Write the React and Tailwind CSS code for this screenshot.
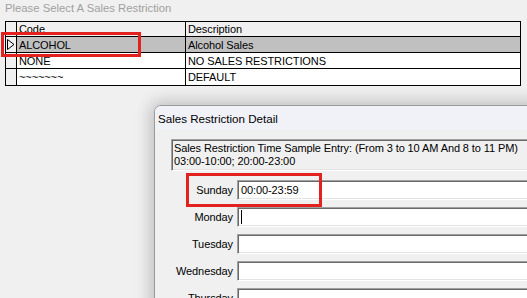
import React from 'react';

const sans = { fontFamily: '"Liberation Sans", Arial, sans-serif' };

const rows = [
  { code: 'ALCOHOL', desc: 'Alcohol Sales', selected: true },
  { code: 'NONE', desc: 'NO SALES RESTRICTIONS' },
  { code: '~~~~~~~', desc: 'DEFAULT' },
];

const days = ['Sunday', 'Monday', 'Tuesday', 'Wednesday', 'Thursday'];

function Sunken({ className = '', children }) {
  return (
    <div
      className={`border border-t-[#a0a0a0] border-l-[#a0a0a0] border-b-white border-r-white shadow-[inset_1px_1px_0_#696969,inset_-1px_-1px_0_#e3e3e3] ${className}`}
    >
      {children}
    </div>
  );
}

export default function App() {
  return (
    <div
      className="relative w-[527px] h-[298px] overflow-hidden bg-[#f0f0f0] text-black text-[11px] tracking-[-0.1px] whitespace-nowrap"
      style={sans}
    >
      {/* Grid panel */}
      <div className="h-[21px] pl-[5px] pt-[1px] leading-[15px] text-[#a0a0a0] text-[11.3px] tracking-normal">
        Please Select A Sales Restriction
      </div>
      <div className="ml-[5px] w-[516px] border border-black leading-[14px]">
        <div className="flex h-[15px] border-b border-black bg-[#f0f0f0]">
          <div className="w-[11px] border-r border-black" />
          <div className="w-[169px] border-r border-black pl-[2px]">Code</div>
          <div className="flex-1 pl-[2px]">Description</div>
        </div>
        {rows.map((r) => (
          <div
            key={r.code}
            className={`flex h-[16px] border-b border-black last:border-b-0 ${r.selected ? 'bg-[#c0c0c0]' : 'bg-white'}`}
          >
            <div className="w-[11px] border-r border-black bg-[#f0f0f0] flex items-center justify-center">
              {r.selected && (
                <svg width="8" height="11" viewBox="0 0 8 11">
                  <path d="M0.5 0.5 L7 5.5 L0.5 10.5 Z" fill="none" stroke="#000" strokeWidth="1" />
                </svg>
              )}
            </div>
            <div className="w-[169px] border-r border-black pl-[2px] flex items-center">{r.code}</div>
            <div className="flex-1 pl-[2px] flex items-center">{r.desc}</div>
          </div>
        ))}
      </div>

      {/* Highlight on selected row */}
      <div className="absolute left-[1px] top-[32px] w-[140px] h-[25px] border-[3px] border-[#e3211f]" />

      {/* Detail dialog */}
      <div className="absolute left-[154px] top-[105px] w-[400px] h-[220px] border border-[#9a9a9a] rounded-tl-[7px] bg-[#f0f0f0] shadow-[0_0_16px_4px_rgba(0,0,0,0.2)]">
        <div className="h-[24px] flex items-center pl-[3px] pt-[1px] rounded-tl-[6px] bg-[#f1f2f8] text-[11.6px] tracking-normal">
          Sales Restriction Detail
        </div>
        <div className="pt-[9px] pl-[16px]">
          <Sunken className="h-[32px] pl-[2px] pt-[2px] leading-[13px] bg-[#f0f0f0]">
            <div>Sales Restriction Time Sample Entry: (From 3 to 10 AM And 8 to 11 PM)</div>
            <div>03:00-10:00; 20:00-23:00</div>
          </Sunken>
        </div>
        <div className="mt-[9px] flex flex-col gap-[7px]">
          {days.map((d, i) => (
            <div key={d} className="relative flex items-center h-[20px]">
              <div className="w-[78px] text-right">{d}</div>
              <Sunken className="ml-[4px] flex-1 h-[20px] bg-white flex items-center pl-[3px]">
                {i === 0 && '00:00-23:59'}
                {i === 1 && <span className="w-px h-[14px] bg-black" />}
              </Sunken>
              {i === 0 && (
                <div className="absolute left-[31px] top-[-7px] w-[136px] h-[34px] border-[3px] border-[#e3211f]" />
              )}
            </div>
          ))}
        </div>
      </div>
    </div>
  );
}
